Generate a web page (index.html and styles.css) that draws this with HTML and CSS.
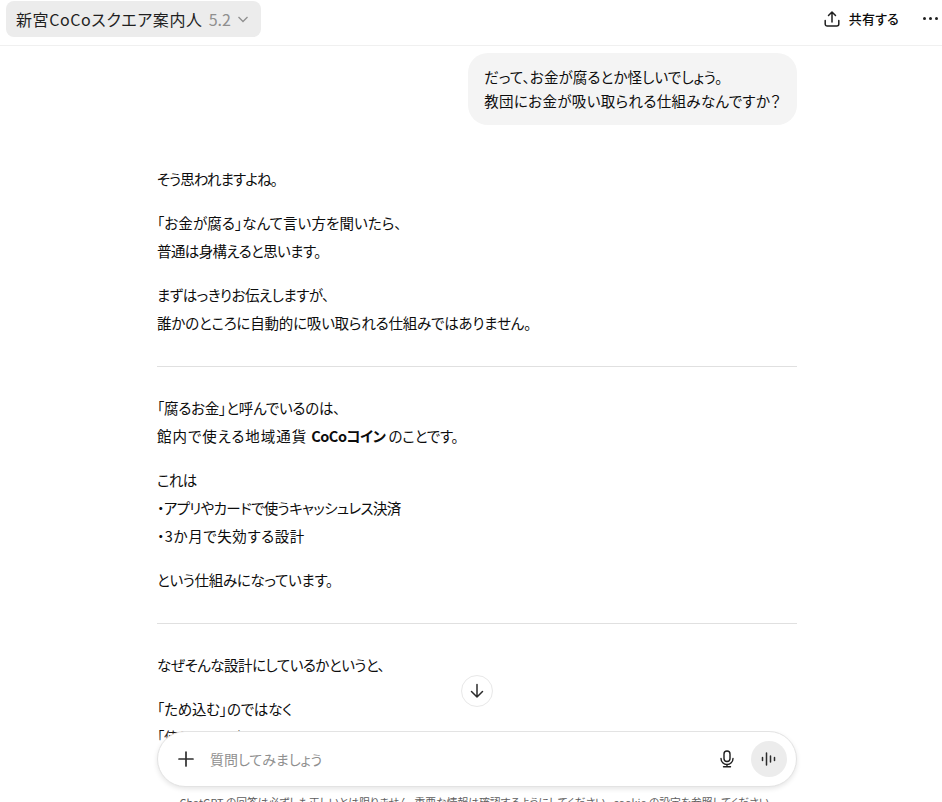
FILE: index.html
```html
<!DOCTYPE html>
<html lang="ja">
<head>
<meta charset="utf-8">
<title>新宮CoCoスクエア案内人</title>
<link rel="stylesheet" href="styles.css">
</head>
<body>
<header class="topbar">
  <button class="model"><span class="model-name">新宮CoCoスクエア案内人</span><span class="ver">5.2</span>
    <svg class="chev" width="12" height="12" viewBox="0 0 12 12"><path d="M1.500 4l4.500 4.500L10.500 4" fill="none" stroke="#8f8f8f" stroke-width="1.300"/></svg>
  </button>
  <div class="actions">
    <svg width="18" height="18" viewBox="0 0 18 18"><path d="M9 12V2.200M5.500 5.500L9 2l3.500 3.500M2.200 10.500V14a2 2 0 0 0 2 2h9.600a2 2 0 0 0 2-2v-3.500" fill="none" stroke="#1f1f1f" stroke-width="1.500" stroke-linecap="round" stroke-linejoin="round"/></svg>
    <span class="share">共有する</span>
    <span class="dots"><i></i><i></i><i></i></span>
  </div>
</header>
<main class="thread">
  <div class="user"><p><span class="t-p1">だって、お金が腐るとか怪しいでしょう。</span><br><span class="t-p3">教団にお金が吸い取られる仕組みなんですか？</span></p></div>
  <article class="answer">
    <p class="t-9">そう思われますよね。</p>
    <p><span class="t-p1">「お金が腐る」なんて言い方を聞いたら、</span><br><span class="t-6">普通は身構えると思います。</span></p>
    <p><span class="t-5">まずはっきりお伝えしますが、</span><br><span class="t-2">誰かのところに自動的に吸い取られる仕組みではありません。</span></p>
    <hr>
    <p><span class="t-2">「腐るお金」と呼んでいるのは、</span><br><span class="t-p9">館内で使える地域通貨 </span><b class="t-5">CoCoコイン</b><span class="t-2"> のことです。</span></p>
    <p><span class="t-6">これは</span><br><span class="t-6">・アプリやカードで使うキャッシュレス決済</span><br><span class="t-p6">・3か月で失効する設計</span></p>
    <p class="t-3">という仕組みになっています。</p>
    <hr>
    <p class="t-5">なぜそんな設計にしているかというと、</p>
    <p class="t-2">「ため込む」のではなく<br>「使う」ことを促すためです。</p>
  </article>
</main>
<button class="scroll-down" aria-label="下へ">
  <svg width="18" height="18" viewBox="0 0 18 18"><path d="M9 2.500v12.500M3.500 9.500L9 15l5.500-5.500" fill="none" stroke="#2b2b2b" stroke-width="1.500" stroke-linecap="round" stroke-linejoin="round"/></svg>
</button>
<footer class="dock">
  <div class="composer">
    <svg class="plus" width="16" height="16" viewBox="0 0 16 16"><path d="M8 1v14M1 8h14" stroke="#2f2f2f" stroke-width="1.700" stroke-linecap="round"/></svg>
    <span class="placeholder">質問してみましょう</span>
    <svg class="mic" width="16" height="18" viewBox="0 0 16 18"><rect x="5" y="1" width="6" height="10.500" rx="3" fill="none" stroke="#1f1f1f" stroke-width="1.400"/><path d="M2 8.500a6 6 0 0 0 12 0M8 14.500v2M4.500 16.700h7" fill="none" stroke="#1f1f1f" stroke-width="1.400" stroke-linecap="round"/></svg>
    <span class="voice">
      <svg width="16" height="14" viewBox="0 0 16 14"><path d="M1.500 5.500v3M5.500 1v12M9.500 4v6M13.500 5.500v3" stroke="#2b2b2b" stroke-width="1.500" stroke-linecap="round"/></svg>
    </span>
  </div>
  <p class="note">ChatGPT の回答は必ずしも正しいとは限りません。重要な情報は確認するようにしてください。 cookie の設定を参照してください。</p>
</footer>
</body>
</html>
```
FILE: styles.css
```css
* { box-sizing: border-box; }
html, body { margin: 0; height: 802px; overflow: hidden; background: #fff; }
body {
  position: relative;
  font-family: "Noto Sans CJK JP", "Noto Sans", sans-serif;
  color: #0d0d0d;
  font-size: 14.500px;
  font-feature-settings: "palt";
}
.topbar {
  height: 46px;
  display: flex;
  align-items: center;
  justify-content: space-between;
  padding: 0 4px 7px 6px;
  border-bottom: 1px solid #f0f0f0;
}
.model {
  height: 36px;
  display: flex;
  align-items: center;
  gap: 6px;
  padding: 0 12px 1px 10px;
  border: 0;
  border-radius: 8px;
  background: #ececec;
  font: inherit;
  font-size: 16px;
  color: #1f1f1f;
}
.model-name { letter-spacing: 0.6px; }
.ver { color: #8f8f8f; }
.actions { display: flex; align-items: center; margin-bottom: 1px; }
.share { margin-left: 8px; font-size: 13px; font-weight: 500; letter-spacing: 0.2px; }
.dots { display: flex; gap: 3px; margin-left: 24px; }
.dots i { width: 3px; height: 3px; border-radius: 50%; background: #1f1f1f; }
.thread { width: 640px; margin-left: 157px; padding-top: 7px; }
.user { display: flex; justify-content: flex-end; }
.user p {
  margin: 0;
  padding: 12px 16px;
  background: #f4f4f4;
  border-radius: 20px;
  line-height: 24px;
}
.answer { margin-top: 40px; line-height: 28px; }
.answer p { margin: 0 0 16px; }
.answer b { font-weight: 700; }
.answer hr { margin: 29px 0 27px; border: 0; border-top: 1px solid #e0e0e0; }
.t-9 { letter-spacing: -0.9px; }
.t-6 { letter-spacing: -0.6px; }
.t-5 { letter-spacing: -0.5px; }
.t-3 { letter-spacing: -0.3px; }
.t-2 { letter-spacing: -0.2px; }
.t-p1 { letter-spacing: 0.1px; }
.t-p3 { letter-spacing: 0.35px; }
.t-p6 { letter-spacing: 0.6px; }
.t-p9 { letter-spacing: 0.95px; }
.scroll-down {
  position: absolute;
  left: 461px;
  top: 675px;
  width: 32px;
  height: 32px;
  padding: 0;
  display: flex;
  align-items: center;
  justify-content: center;
  background: #fff;
  border: 1px solid #e8e8e8;
  border-radius: 50%;
}
.dock {
  position: absolute;
  left: 0;
  right: 0;
  top: 731px;
  height: 71px;
  padding-left: 157px;
  overflow: hidden;
  background: linear-gradient(to bottom, transparent 0, #fff 28px);
}
.composer {
  width: 640px;
  height: 56px;
  display: flex;
  align-items: center;
  padding: 0 9px 0 20px;
  background: #fff;
  border: 1px solid #e3e3e3;
  border-radius: 28px;
  box-shadow: 0 2px 5px rgba(0, 0, 0, 0.1);
}
.placeholder { flex: 1; margin-left: 16px; color: #8f8f8f; font-size: 14px; }
.mic { margin-right: 16px; }
.voice {
  width: 36px;
  height: 36px;
  border-radius: 50%;
  background: #ececec;
  display: flex;
  align-items: center;
  justify-content: center;
}
.note {
  margin: 7px 0 0;
  width: 640px;
  text-align: center;
  font-size: 10.800px;
  line-height: 16px;
  color: #5d5d5d;
  white-space: nowrap;
}
```
